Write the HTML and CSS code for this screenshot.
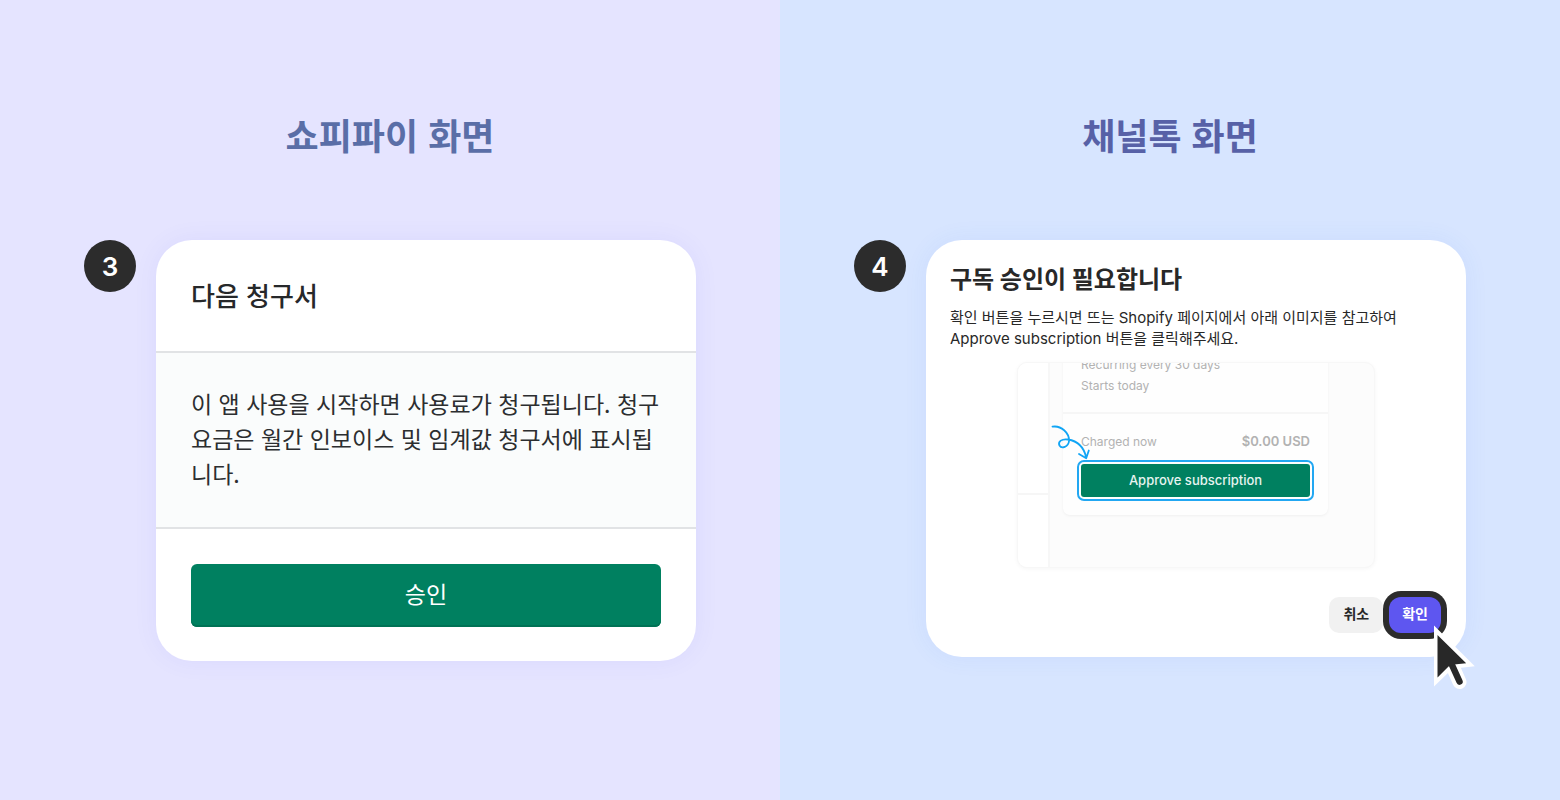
FILE: index.html
```html
<!DOCTYPE html>
<html lang="ko">
<head>
<meta charset="utf-8">
<meta name="viewport" content="width=device-width, initial-scale=1">
<title>구독 승인 안내</title>
<link rel="stylesheet" href="styles.css">
</head>
<body>
<main class="guide">
  <section class="panel panel-shopify">
    <h1 class="panel-title">쇼피파이 화면</h1>
    <div class="step">
      <span class="step-number">3</span>
      <article class="card">
        <h2 class="bill-title">다음 청구서</h2>
        <p class="bill-text">이 앱 사용을 시작하면 사용료가 청구됩니다. 청구<br>요금은 월간 인보이스 및 임계값 청구서에 표시됩<br>니다.</p>
        <div class="bill-actions">
          <button class="approve-button" type="button">승인</button>
        </div>
      </article>
    </div>
  </section>

  <section class="panel panel-channel">
    <h1 class="panel-title">채널톡 화면</h1>
    <div class="step">
      <span class="step-number">4</span>
      <article class="card dialog">
        <h2 class="dialog-title">구독 승인이 필요합니다</h2>
        <p class="dialog-text">확인 버튼을 누르시면 뜨는 Shopify 페이지에서 아래 이미지를 참고하여<br>Approve subscription 버튼을 클릭해주세요.</p>
        <div class="preview">
          <div class="preview-side"></div>
          <div class="preview-body">
            <div class="receipt">
              <div class="receipt-terms">
                <p>Recurring every 30 days</p>
                <p>Starts today</p>
              </div>
              <div class="receipt-total">
                <p class="charge"><span>Charged now</span><strong>$0.00 USD</strong></p>
                <button class="subscribe-button" type="button">Approve subscription</button>
              </div>
            </div>
          </div>
          <svg class="preview-arrow" width="44" height="40" viewBox="0 0 44 40" fill="none" stroke="#11a5f5" stroke-width="1.8" stroke-linecap="round" stroke-linejoin="round" aria-hidden="true">
            <path d="M3.500 4.700C12 3.200 20.500 11 20 19C19.500 25 12.500 27 10.500 23.500C8.500 19.500 13 16.500 19 17.500C28.500 19 35 25.500 37.200 35.500M30 32L37.200 36.200L39.800 28.500"/>
          </svg>
        </div>
        <div class="dialog-actions">
          <button class="dialog-button cancel" type="button">취소</button>
          <div class="pointer-target">
            <button class="dialog-button confirm" type="button">확인</button>
            <svg class="pointer" width="44" height="68" viewBox="0 0 44 68" aria-hidden="true">
              <path d="M20 42L27.500 59" stroke="#fff" stroke-width="14" stroke-linecap="round"/>
              <path d="M2 2.500L42.800 43.300L27 45L20 43L16 50L2 63.500Z" fill="#fff"/>
              <path d="M20 42L27.500 58.500" stroke="#282828" stroke-width="6.500" stroke-linecap="round"/>
              <path d="M5.500 12L34.200 40.200L22 41.500L16.500 43.500L5.500 54.500Z" fill="#282828"/>
            </svg>
          </div>
        </div>
      </article>
    </div>
  </section>
</main>
</body>
</html>
```

FILE: styles.css
```css
* {
  box-sizing: border-box;
}

body,
h1,
h2,
p {
  margin: 0;
}

body {
  font-family: Inter, "Noto Sans CJK KR", sans-serif;
  color: #282828;
}

button {
  border: 0;
  font-family: inherit;
}

.guide {
  display: grid;
  grid-template-columns: minmax(0, 1fr) minmax(0, 1fr);
  min-height: 100vh;
}

.panel {
  padding: 106px 84px 40px;
}

.panel-shopify {
  background: #e5e4ff;
}

.panel-channel {
  padding: 106px 94px 40px 74px;
  background: #d7e5ff;
}

.panel-title {
  margin-bottom: 78px;
  font-family: "Noto Sans CJK KR", sans-serif;
  font-size: 36px;
  font-weight: 700;
  line-height: 56px;
  text-align: center;
  color: #5a6ea7;
}

.panel-channel .panel-title {
  padding-left: 20px;
  color: #5761a7;
}

.step {
  display: flex;
  align-items: flex-start;
  gap: 20px;
}

.step-number {
  flex: none;
  width: 52px;
  height: 52px;
  border-radius: 50%;
  background: #2c2c2c;
  color: #fff;
  font-size: 26px;
  font-weight: 600;
  line-height: 53px;
  text-align: center;
}

.card {
  flex: 1;
  border-radius: 36px;
  background: #fff;
  box-shadow: 0 0 24px rgba(90, 90, 240, 0.07);
}

.panel-channel .card {
  box-shadow: 0 0 24px rgba(60, 120, 240, 0.07);
}

.bill-title {
  padding: 35px 35px 36px;
  font-family: "Noto Sans CJK KR", sans-serif;
  font-size: 26px;
  font-weight: 500;
  line-height: 40px;
  color: #26282a;
}

.bill-text {
  padding: 33px 35px 36px;
  border-top: 2px solid #e1e3e5;
  border-bottom: 2px solid #e1e3e5;
  background: #fafcfc;
  font-family: "Noto Sans CJK KR", sans-serif;
  font-size: 23px;
  line-height: 35px;
  white-space: nowrap;
  color: #2c2e30;
}

.bill-actions {
  padding: 35px 35px 34px;
}

.approve-button {
  display: block;
  width: 100%;
  padding: 12px 0 16px;
  border-radius: 6px;
  background: #008060;
  box-shadow: inset 0 -2px 0 #007255;
  color: #fff;
  font-family: "Noto Sans CJK KR", sans-serif;
  font-size: 23px;
  line-height: 35px;
}

.dialog {
  padding: 24px;
}

.dialog-title {
  margin-bottom: 11px;
  font-size: 24px;
  font-weight: 700;
  line-height: 32px;
}

.dialog-text {
  font-size: 15px;
  line-height: 21px;
}

.preview {
  position: relative;
  display: flex;
  max-width: 358px;
  margin: 13px auto 29px;
  border: 1px solid #f7f7f7;
  border-radius: 10px;
  background: #fcfcfc;
  box-shadow: 0 1px 4px rgba(0, 0, 0, 0.04);
  overflow: hidden;
  font-size: 12px;
  line-height: 21px;
  color: #b2b2b2;
}

.preview-side {
  width: 32px;
  border-right: 2px solid #f7f7f7;
  background: linear-gradient(#f6f6f6, #f6f6f6) 0 130px / 100% 2px no-repeat #fff;
}

.preview-body {
  flex: 1;
  padding: 0 46px 52px 13px;
}

.receipt {
  border-radius: 0 0 7px 7px;
  background: #fefefe;
  box-shadow: 0 1px 3px rgba(0, 0, 0, 0.05);
}

.receipt-terms {
  margin-top: -9px;
  padding: 0 18px 16px;
  border-bottom: 2px solid #f6f6f6;
}

.receipt-total {
  padding: 17px 18px 18px;
}

.charge {
  display: flex;
  justify-content: space-between;
  margin-bottom: 12px;
}

.charge strong {
  font-size: 13px;
  font-weight: 600;
}

.subscribe-button {
  display: block;
  width: 100%;
  padding: 6px 0;
  border-radius: 3px;
  outline: 2px solid #22a7f2;
  outline-offset: 2px;
  background: #008060;
  color: #e6f4f0;
  font-size: 13px;
  font-weight: 500;
  line-height: 21px;
}

.preview-arrow {
  position: absolute;
  top: 59px;
  left: 31px;
}

.dialog-actions {
  display: flex;
  justify-content: flex-end;
  gap: 6px;
  padding-right: 1px;
}

.dialog-button {
  display: block;
  padding: 8px 13px 10px;
  border-radius: 10px;
  font-size: 14px;
  font-weight: 700;
  line-height: 18px;
}

.cancel {
  padding: 8px 14px 10px;
  background: #f1f1f1;
  color: #282828;
}

.confirm {
  border-radius: 12px;
  background: #5e56f0;
  box-shadow: 0 0 0 6px #2c2c2c;
  color: #fff;
}

.pointer-target {
  position: relative;
}

.pointer {
  position: absolute;
  top: 26px;
  left: 43px;
}
```
